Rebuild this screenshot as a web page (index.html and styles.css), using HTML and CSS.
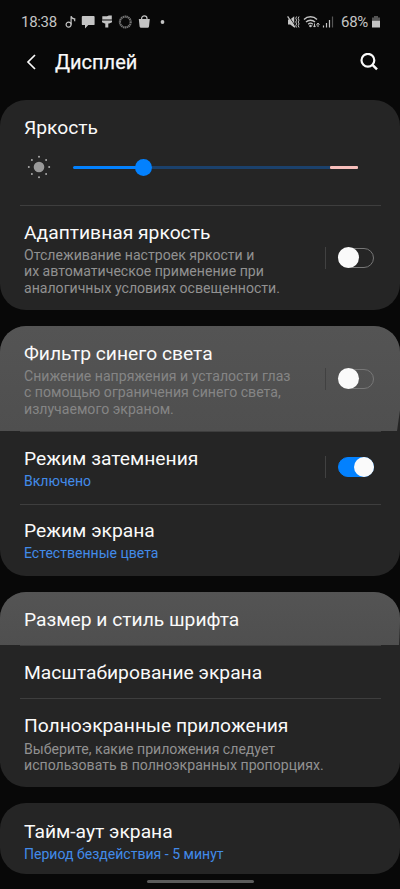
FILE: index.html
```html
<!DOCTYPE html>
<html lang="ru">
<head>
<meta charset="utf-8">
<title>Дисплей</title>
<link rel="stylesheet" href="styles.css">
</head>
<body>
<div class="status">
  <span class="time">18:38</span>
  <svg class="status-left" width="104" height="16" viewBox="0 0 104 16" fill="#c4c4c4">
    <g fill="none" stroke="#c4c4c4" stroke-width="1.200"><circle cx="4.600" cy="10.600" r="2.500"/><path d="M7.100 10.600V2.200c.3 1.800 1.500 2.700 3.600 2.600v2.400"/></g>
    <path d="M18.700 2h11a.9.9 0 0 1 .9.9v7.300a.9.9 0 0 1-.9.9h-5.400L21 14.400v-3.300h-2.300a.9.9 0 0 1-.9-.9V2.900a.9.9 0 0 1 .9-.9z"/>
    <path d="M38.300 2.200h4.600l2-.8h2.900v4.200h-9.500z"/><path d="M38 5.600h10v1.400H38z" fill="#666"/><path d="M38 7h10v1.300l-2.900 1.300h-.8v4h-3v-4h-.5L38 8.300z"/>
    <circle cx="61.300" cy="8" r="5.400" fill="none" stroke="#737373" stroke-width="2.200" stroke-dasharray="1.400 .450"/>
    <path d="M74.800 5h11l-.8 7.500a1.500 1.500 0 0 1-1.500 1.300h-6.400a1.500 1.500 0 0 1-1.500-1.300z"/>
    <path d="M77.600 5.300V4.500a2.700 2.700 0 0 1 5.400 0v.8" fill="none" stroke="#c4c4c4" stroke-width="1.200"/>
    <circle cx="98.500" cy="8" r="1.900"/>
  </svg>
  <svg class="status-right" width="48" height="16" viewBox="0 0 48 16" fill="none" stroke="#c4c4c4" stroke-width="1.200">
    <path d="M1 5.500h2.200l4-3.300v11.300l-4-3.100H1z" fill="#c4c4c4" stroke="none"/>
    <path d="M1.500 1.800l7 10.500" stroke="#080808" stroke-width=".9"/><path d="M.6 2.300l7.400 11"/>
    <path d="M9.600 2.500l-.8 1.800.8 1.900-.8 1.800.8 1.900-.8 1.800.8 1.800M12 2.500l-.8 1.800.8 1.900-.8 1.800.8 1.900-.8 1.800.8 1.800" stroke-width="1"/>
    <path d="M17 5.400c3.500-3.500 9.500-3.500 13 0M19 8c2.500-2.400 6.500-2.400 9 0M21.200 10.200c1.300-1.200 3.300-1.200 4.600 0" stroke-width="1.400"/>
    <circle cx="23.500" cy="12" r="1.300" fill="#c4c4c4" stroke="none"/>
    <path d="M27.500 9.500v3.500M26 11.600l1.500 1.500 1.500-1.500M31 13V9.200M29.500 10.600L31 9.100l1.500 1.500" stroke-width="1"/>
    <path d="M36.500 13.500v-2M39.500 13.500V9M42.500 13.500V6"/><path d="M45.500 13.500V2.500" stroke="#555"/>
  </svg>
  <span class="percent">68%</span>
  <svg class="battery" width="8" height="13" viewBox="0 0 8 13"><path d="M0 1.500h2V0h4v1.500h2V5H0z" fill="#555"/><path d="M0 4.800h8v6.700H0z" fill="#c4c4c4"/></svg>
</div>
<header class="bar">
  <svg class="back" width="12" height="18" viewBox="0 0 12 18"><path d="M10 2L3 9l7 7" fill="none" stroke="#fafafa" stroke-width="1.700"/></svg>
  <h1>Дисплей</h1>
  <svg class="search" width="18" height="18" viewBox="0 0 18 18" fill="none" stroke="#fafafa" stroke-width="2.200"><circle cx="7.900" cy="7.300" r="6.400"/><path d="M12.500 11.900l4.500 4.500" stroke-width="2.500"/></svg>
</header>
<main>
  <section class="card">
    <div class="row brightness">
      <h2>Яркость</h2>
      <div class="control">
        <svg width="24" height="24" viewBox="0 0 24 24" fill="#999"><circle cx="12" cy="12" r="5.300"/><g fill="#aaa"><circle cx="12" cy="1.800" r="1"/><circle cx="12" cy="22.200" r="1"/><circle cx="1.800" cy="12" r="1"/><circle cx="22.200" cy="12" r="1"/><circle cx="4.900" cy="4.900" r="1"/><circle cx="19.100" cy="4.900" r="1"/><circle cx="4.900" cy="19.100" r="1"/><circle cx="19.100" cy="19.100" r="1"/></g></svg>
        <div class="slider"><span class="filled"></span><span class="knob"></span><span class="rest"></span><span class="peak"></span></div>
      </div>
    </div>
    <div class="row tall">
      <div class="text"><h2>Адаптивная яркость</h2><p>Отслеживание настроек яркости и<br>их автоматическое применение при<br>аналогичных условиях освещенности.</p></div>
      <div class="switch-box"><span class="switch"></span></div>
    </div>
  </section>
  <section class="card">
    <div class="row tall lit filter">
      <div class="text"><h2>Фильтр синего света</h2><p>Снижение напряжения и усталости глаз<br>с помощью ограничения синего света,<br>излучаемого экраном.</p></div>
      <div class="switch-box"><span class="switch"></span></div>
    </div>
    <div class="row dark">
      <div class="text"><h2>Режим затемнения</h2><p class="value">Включено</p></div>
      <div class="switch-box"><span class="switch on"></span></div>
    </div>
    <div class="row mode">
      <div class="text"><h2>Режим экрана</h2><p class="value">Естественные цвета</p></div>
    </div>
  </section>
  <section class="card">
    <div class="row single lit"><h2>Размер и стиль шрифта</h2></div>
    <div class="row single"><h2>Масштабирование экрана</h2></div>
    <div class="row full"><div class="text"><h2>Полноэкранные приложения</h2><p>Выберите, какие приложения следует<br>использовать в полноэкранных пропорциях.</p></div></div>
  </section>
  <section class="card">
    <div class="row last"><div class="text"><h2>Тайм-аут экрана</h2><p class="value">Период бездействия - 5 минут</p></div></div>
  </section>
</main>
<div class="home"></div>
</body>
</html>
```

FILE: styles.css
```css
* { box-sizing: border-box; margin: 0; padding: 0; }
body {
  width: 400px; height: 889px; overflow: hidden;
  background: #080808; color: #fafafa;
  font-family: Roboto, "Noto Sans", sans-serif;
}
svg { display: block; flex: none; }
.status { display: flex; align-items: center; height: 44px; padding: 0 20px 0 21px; color: #c4c4c4; font-size: 15px; }
.time { width: 36px; letter-spacing: -.3px; }
.status-left { margin-left: 7px; }
.status-right { margin-left: auto; }
.percent { margin-left: 6px; width: 27px; letter-spacing: -.3px; }
.battery { margin-left: 4px; }
.bar { display: flex; align-items: center; height: 36px; padding: 0 22px 0 25px; }
h1 { flex: 1; margin-left: 18px; font-size: 20px; line-height: 28px; font-weight: 400; -webkit-text-stroke: .25px #fafafa; }
main { display: grid; gap: 16px; margin-top: 20px; }
.card { background: #252525; border-radius: 26px; overflow: hidden; }
.row { position: relative; display: flex; padding: 16px 24px 0; }
.row + .row::before { content: ""; position: absolute; top: 0; left: 20px; right: 19px; height: 1px; background: #3e3e3e; }
h2 { font-size: 19.250px; line-height: 24px; font-weight: 400; white-space: nowrap; }
p { margin-top: 2px; color: #919191; font-size: 14.100px; line-height: 16.300px; white-space: nowrap; }
.value { color: #428be9; font-size: 14.050px; }
.text { flex: 1; }
.brightness { height: 105px; flex-direction: column; }
.control { display: flex; align-items: center; margin: 15px 18px 0 3px; }
.slider { flex: 1; display: flex; align-items: center; margin-left: 22px; }
.slider span { height: 3px; }
.slider .filled { width: 64px; background: #0381fe; border-radius: 2px; }
.slider .knob { width: 17px; height: 17px; border-radius: 50%; background: #0381fe; margin: 0 -2px; z-index: 1; }
.slider .rest { flex: 1; background: #1b416c; }
.slider .peak { width: 28px; background: #f7bebb; border-radius: 1px; }
.tall { height: 105px; }
.dark { height: 73px; }
.mode { height: 72px; padding-top: 15px; }
.single { height: 53px; }
.full { height: 89px; }
.full p { margin-top: 3px; }
.last { height: 71px; padding-top: 17px; }
.lit { background: linear-gradient(#545454, #4f4f4f); }
.filter { clip-path: polygon(0 0, 100% 0, 100% 84px, 397px 100%, 0 100%); }
.lit.single { clip-path: polygon(0 0, 100% 0, 100% 30px, 399px 100%, 0 100%); }
.lit p { color: #858585; }
.switch-box { align-self: center; display: flex; align-items: center; height: 22px; width: 49px; padding-left: 12px; margin-right: 2px; margin-top: -15px; border-left: 1px solid #414141; }
.dark .switch-box { margin-top: -17px; }
.switch { position: relative; width: 36px; height: 20px; border: 1px solid #777; border-radius: 10px; }
.switch::after { content: ""; position: absolute; left: -1px; top: -2px; width: 21px; height: 21px; border-radius: 50%; background: #fafafa; }
.switch.on { background: #0381fe; border-color: #0381fe; }
.switch.on::after { left: auto; right: -1px; top: -1px; width: 20px; height: 20px; }
.home { width: 107px; height: 3px; margin: 6px auto 0; border-radius: 2px; background: #5b5b5b; }
```
